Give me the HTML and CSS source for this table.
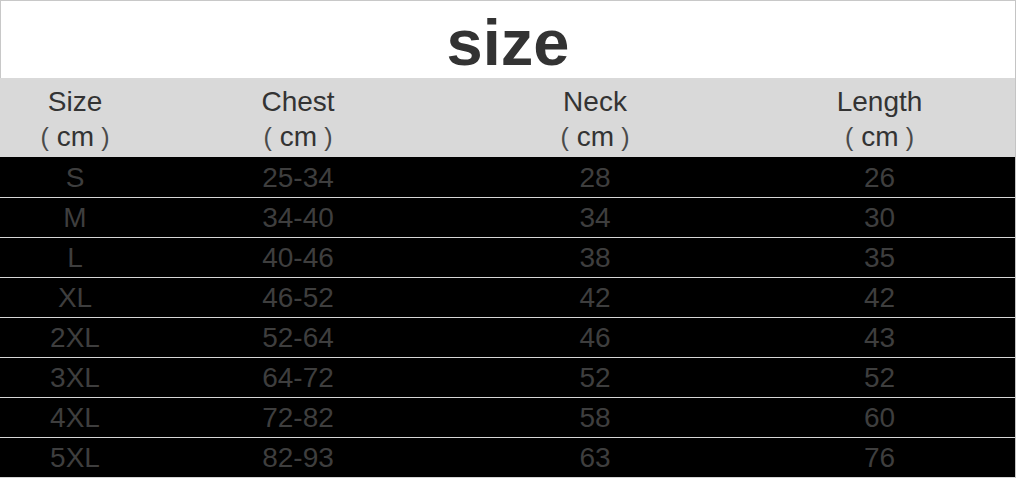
FILE: index.html
```html
<!DOCTYPE html>
<html>
<head>
<meta charset="utf-8">
<link rel="stylesheet" href="styles.css">
</head>
<body>
<div class="chart">
  <div class="title">size</div>
  <div class="row head">
    <div>Size<br><span class="pl">(</span>cm<span class="pr">)</span></div>
    <div>Chest<br><span class="pl">(</span>cm<span class="pr">)</span></div>
    <div>Neck<br><span class="pl">(</span>cm<span class="pr">)</span></div>
    <div>Length<br><span class="pl">(</span>cm<span class="pr">)</span></div>
  </div>
  <div class="row data first"><div>S</div><div>25-34</div><div>28</div><div>26</div></div>
  <div class="row data"><div>M</div><div>34-40</div><div>34</div><div>30</div></div>
  <div class="row data"><div>L</div><div>40-46</div><div>38</div><div>35</div></div>
  <div class="row data"><div>XL</div><div>46-52</div><div>42</div><div>42</div></div>
  <div class="row data"><div>2XL</div><div>52-64</div><div>46</div><div>43</div></div>
  <div class="row data"><div>3XL</div><div>64-72</div><div>52</div><div>52</div></div>
  <div class="row data"><div>4XL</div><div>72-82</div><div>58</div><div>60</div></div>
  <div class="row data"><div>5XL</div><div>82-93</div><div>63</div><div>76</div></div>
</div>
</body>
</html>
```
FILE: styles.css
```css
html, body {
  margin: 0;
  padding: 0;
  background: #fff;
}
body {
  width: 1018px;
  height: 479px;
  overflow: hidden;
  font-family: "Liberation Sans", Arial, "Noto Sans CJK SC", sans-serif;
}
.chart {
  width: 1015px;
  border-right: 1px solid #c4c4c4;
  border-top: 1px solid #c8c8c8;
  background: #000;
}
.title {
  box-sizing: border-box;
  height: 77px;
  padding-top: 6px;
  line-height: 71px;
  text-align: center;
  font-size: 65px;
  font-weight: bold;
  color: #333;
  background: #fff;
  border-left: 1px solid #c8c8c8;
}
.row {
  display: grid;
  grid-template-columns: 150px 296px 298px 271px;
  text-align: center;
}
.head {
  box-sizing: border-box;
  height: 79px;
  padding-top: 6px;
  background: #d9d9d9;
  color: #333;
  font-size: 28px;
  line-height: 35px;
}
.pl, .pr {
  font-family: "Liberation Sans", sans-serif;
  font-weight: normal;
  font-size: 25px;
  color: #4a4a4a;
}
.pl {
  margin-right: 8px;
}
.pr {
  margin-left: 7px;
}
.data {
  box-sizing: border-box;
  height: 40px;
  padding-top: 1px;
  line-height: 38px;
  font-size: 28px;
  color: #3e3e3e;
  background: #000;
  border-bottom: 1px solid #d6d6d6;
}
.data.first {
  height: 41px;
  padding-top: 2px;
}
```
